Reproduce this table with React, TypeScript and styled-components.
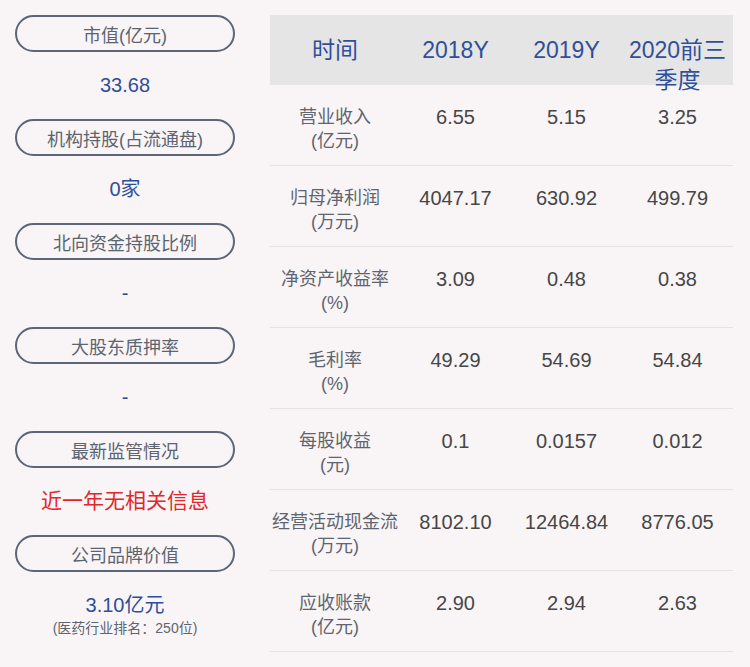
import React from "react";
import styled, { createGlobalStyle } from "styled-components";

const GlobalStyle = createGlobalStyle`
  html, body {
    margin: 0;
    padding: 0;
    background: #f9f5f6;
  }
  body {
    font-family: "Liberation Sans", "Noto Sans CJK SC", sans-serif;
  }
`;

const Page = styled.div`
  width: 750px;
  height: 667px;
  box-sizing: border-box;
  padding: 15px 17px 0 15px;
  display: flex;
  gap: 35px;
  background: #f9f5f6;
  overflow: hidden;
`;

const LeftColumn = styled.div`
  width: 220px;
  display: flex;
  flex-direction: column;
`;

const Pill = styled.div`
  height: 37px;
  box-sizing: border-box;
  border: 2px solid #5d6676;
  border-radius: 19px;
  display: flex;
  align-items: center;
  justify-content: center;
  font-size: 18px;
  color: #5b6470;
`;

const ValueBlock = styled.div`
  height: 67px;
  box-sizing: border-box;
  padding-top: 18px;
  display: flex;
  flex-direction: column;
  align-items: center;
`;

const Value = styled.div<{ $red?: boolean }>`
  line-height: 30px;
  font-size: ${(p) => (p.$red ? "21px" : "20px")};
  color: ${(p) => (p.$red ? "#e3262c" : "#2d4e9b")};
`;

const SubText = styled.div`
  font-size: 14px;
  line-height: 16px;
  color: #5e6570;
`;

const Table = styled.div`
  width: 463px;
  display: grid;
  grid-template-columns: 130px repeat(3, 111px);
  align-content: start;
`;

const HeaderCell = styled.div`
  height: 70px;
  box-sizing: border-box;
  padding-top: 20px;
  background: #e5e5e5;
  text-align: center;
  font-size: 23px;
  line-height: 30px;
  color: #2f4f9b;
  position: relative;
  z-index: 1;
`;

const Cell = styled.div<{ $label?: boolean }>`
  height: 81px;
  box-sizing: border-box;
  padding-top: 20px;
  border-bottom: 1px solid #e6e2e3;
  text-align: center;
  line-height: 24px;
  font-size: ${(p) => (p.$label ? "18px" : "20px")};
  color: ${(p) => (p.$label ? "#5e6570" : "#464646")};
  white-space: ${(p) => (p.$label ? "normal" : "nowrap")};
`;

const items: { label: string; value: string; red?: boolean; sub?: string }[] = [
  { label: "市值(亿元)", value: "33.68" },
  { label: "机构持股(占流通盘)", value: "0家" },
  { label: "北向资金持股比例", value: "-" },
  { label: "大股东质押率", value: "-" },
  { label: "最新监管情况", value: "近一年无相关信息", red: true },
  { label: "公司品牌价值", value: "3.10亿元", sub: "(医药行业排名：250位)" },
];

const headers = ["时间", "2018Y", "2019Y", "2020前三季度"];

const rows: { name: string; unit: string; values: string[] }[] = [
  { name: "营业收入", unit: "(亿元)", values: ["6.55", "5.15", "3.25"] },
  { name: "归母净利润", unit: "(万元)", values: ["4047.17", "630.92", "499.79"] },
  { name: "净资产收益率", unit: "(%)", values: ["3.09", "0.48", "0.38"] },
  { name: "毛利率", unit: "(%)", values: ["49.29", "54.69", "54.84"] },
  { name: "每股收益", unit: "(元)", values: ["0.1", "0.0157", "0.012"] },
  { name: "经营活动现金流", unit: "(万元)", values: ["8102.10", "12464.84", "8776.05"] },
  { name: "应收账款", unit: "(亿元)", values: ["2.90", "2.94", "2.63"] },
];

export default function App() {
  return (
    <>
      <GlobalStyle />
      <Page>
        <LeftColumn>
          {items.map((it) => (
            <React.Fragment key={it.label}>
              <Pill>{it.label}</Pill>
              <ValueBlock>
                <Value $red={it.red}>{it.value}</Value>
                {it.sub && <SubText>{it.sub}</SubText>}
              </ValueBlock>
            </React.Fragment>
          ))}
        </LeftColumn>
        <Table>
          {headers.map((h) => (
            <HeaderCell key={h}>{h}</HeaderCell>
          ))}
          {rows.map((r) => (
            <React.Fragment key={r.name}>
              <Cell $label>
                {r.name}
                <br />
                {r.unit}
              </Cell>
              {r.values.map((v, i) => (
                <Cell key={i}>{v}</Cell>
              ))}
            </React.Fragment>
          ))}
        </Table>
      </Page>
    </>
  );
}
